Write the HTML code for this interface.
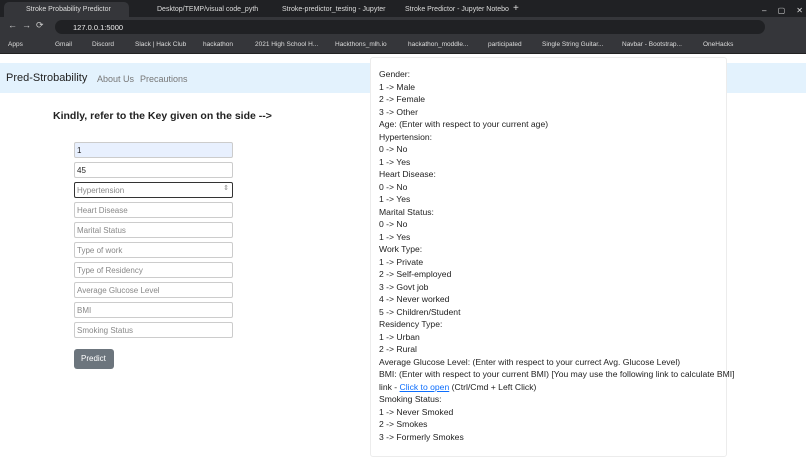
<!DOCTYPE html><html><head><style>
*{margin:0;padding:0;box-sizing:border-box}
body{width:806px;height:453px;overflow:hidden;background:#fff;font-family:"Liberation Sans",sans-serif;position:relative}
.tabs{position:absolute;top:0;left:0;width:806px;height:17px;background:#202124}
.tab{position:absolute;top:2px;height:15px;font-size:7px;color:#ddd;padding:4px 0 0 22px;white-space:nowrap}
.tab.a{background:#35363a;border-radius:5px 5px 0 0;left:4px;width:125px}
.addr{position:absolute;top:17px;left:0;width:806px;height:19px;background:#35363a}
.url{position:absolute;top:20px;left:55px;width:710px;height:14px;background:#202124;border-radius:7px;font-size:7.5px;color:#eee;padding:3px 0 0 18px}
.bm{position:absolute;top:36px;left:0;width:806px;height:18px;background:#35363a;border-bottom:1px solid #222;font-size:6.5px;color:#ddd;white-space:nowrap}
.bm span{position:absolute;top:5px}
.nav{position:absolute;top:63px;left:0;width:806px;height:30px;background:#e3f2fd}
.brand{position:absolute;left:6px;top:9px;font-size:11px;color:#222}
.lk{position:absolute;top:11px;font-size:9px;color:#777}
h3{position:absolute;left:53px;top:110px;font-size:10.5px;color:#222;font-weight:bold;white-space:nowrap}
.in{position:absolute;left:74px;width:159px;height:16px;border:1px solid #ccc;border-radius:2px;font-size:8px;color:#888;padding:3px 0 0 2px;background:#fff}
.btn{position:absolute;left:74px;top:349px;width:40px;height:20px;background:#6c757d;border-radius:3px;color:#fff;font-size:8px;padding:5px 0 0 7px}
.panel{position:absolute;left:370px;top:57px;width:357px;height:400px;background:#fff;border:1px solid #ececec;border-radius:3px}
.panel div{position:absolute;left:8px;font-size:8.6px;color:#222;white-space:nowrap}
a{color:#0d6efd;text-decoration:underline}
</style></head><body>
<div class="tabs">
<div class="tab a">Stroke Probability Predictor</div>
<div class="tab" style="left:135px">Desktop/TEMP/visual code_pyth</div>
<div class="tab" style="left:260px">Stroke-predictor_testing - Jupyter</div>
<div class="tab" style="left:383px">Stroke Predictor - Jupyter Notebo</div>
<div class="tab" style="left:505px;font-size:10px;padding:1px 0 0 8px">+</div>
<div class="tab" style="left:740px;font-size:8px">–&nbsp;&nbsp;&nbsp;&nbsp;&nbsp;▢&nbsp;&nbsp;&nbsp;&nbsp;&nbsp;✕</div>
</div>
<div class="addr"><span style="position:absolute;left:8px;top:3px;color:#ccc;font-size:9px">←&nbsp;&nbsp;→&nbsp;&nbsp;⟳</span></div>
<div class="url">127.0.0.1:5000</div>
<div class="bm"><span style="left:8px">Apps</span><span style="left:55px">Gmail</span><span style="left:92px">Discord</span><span style="left:135px">Slack | Hack Club</span><span style="left:203px">hackathon</span><span style="left:255px">2021 High School H...</span><span style="left:335px">Hackthons_mlh.io</span><span style="left:408px">hackathon_moddle...</span><span style="left:488px">participated</span><span style="left:542px">Single String Guitar...</span><span style="left:622px">Navbar - Bootstrap...</span><span style="left:703px">OneHacks</span></div>
<div class="nav"><div class="brand">Pred-Strobability</div><div class="lk" style="left:97px">About Us</div><div class="lk" style="left:140px">Precautions</div></div>
<h3>Kindly, refer to the Key given on the side --&gt;</h3>
<div class="in" style="top:142px;background:#e8f0fe;color:#222">1</div>
<div class="in" style="top:162px;color:#222">45</div>
<div class="in" style="top:182px;border:1px solid #333">Hypertension<span style="position:absolute;right:3px;top:1px;font-size:7px">⇕</span></div>
<div class="in" style="top:202px">Heart Disease</div>
<div class="in" style="top:222px">Marital Status</div>
<div class="in" style="top:242px">Type of work</div>
<div class="in" style="top:262px">Type of Residency</div>
<div class="in" style="top:282px">Average Glucose Level</div>
<div class="in" style="top:302px">BMI</div>
<div class="in" style="top:322px">Smoking Status</div>
<div class="btn">Predict</div>
<div class="panel">
<div style="top:11px">Gender:</div><div style="top:23.5px">1 -&gt; Male</div><div style="top:36px">2 -&gt; Female</div><div style="top:48.5px">3 -&gt; Other</div>
<div style="top:61px">Age: (Enter with respect to your current age)</div>
<div style="top:73.5px">Hypertension:</div><div style="top:86px">0 -&gt; No</div><div style="top:98.5px">1 -&gt; Yes</div>
<div style="top:111px">Heart Disease:</div><div style="top:123.5px">0 -&gt; No</div><div style="top:136px">1 -&gt; Yes</div>
<div style="top:148.5px">Marital Status:</div><div style="top:161px">0 -&gt; No</div><div style="top:173.5px">1 -&gt; Yes</div>
<div style="top:186px">Work Type:</div><div style="top:198.5px">1 -&gt; Private</div><div style="top:211px">2 -&gt; Self-employed</div><div style="top:223.5px">3 -&gt; Govt job</div><div style="top:236px">4 -&gt; Never worked</div><div style="top:248.5px">5 -&gt; Children/Student</div>
<div style="top:261px">Residency Type:</div><div style="top:273.5px">1 -&gt; Urban</div><div style="top:286px">2 -&gt; Rural</div>
<div style="top:298.5px">Average Glucose Level: (Enter with respect to your currect Avg. Glucose Level)</div>
<div style="top:311px">BMI: (Enter with respect to your current BMI) [You may use the following link to calculate BMI]</div>
<div style="top:323.5px">link - <a>Click to open</a> (Ctrl/Cmd + Left Click)</div>
<div style="top:336px">Smoking Status:</div><div style="top:348.5px">1 -&gt; Never Smoked</div><div style="top:361px">2 -&gt; Smokes</div><div style="top:373.5px">3 -&gt; Formerly Smokes</div>
</div>
</body></html>
